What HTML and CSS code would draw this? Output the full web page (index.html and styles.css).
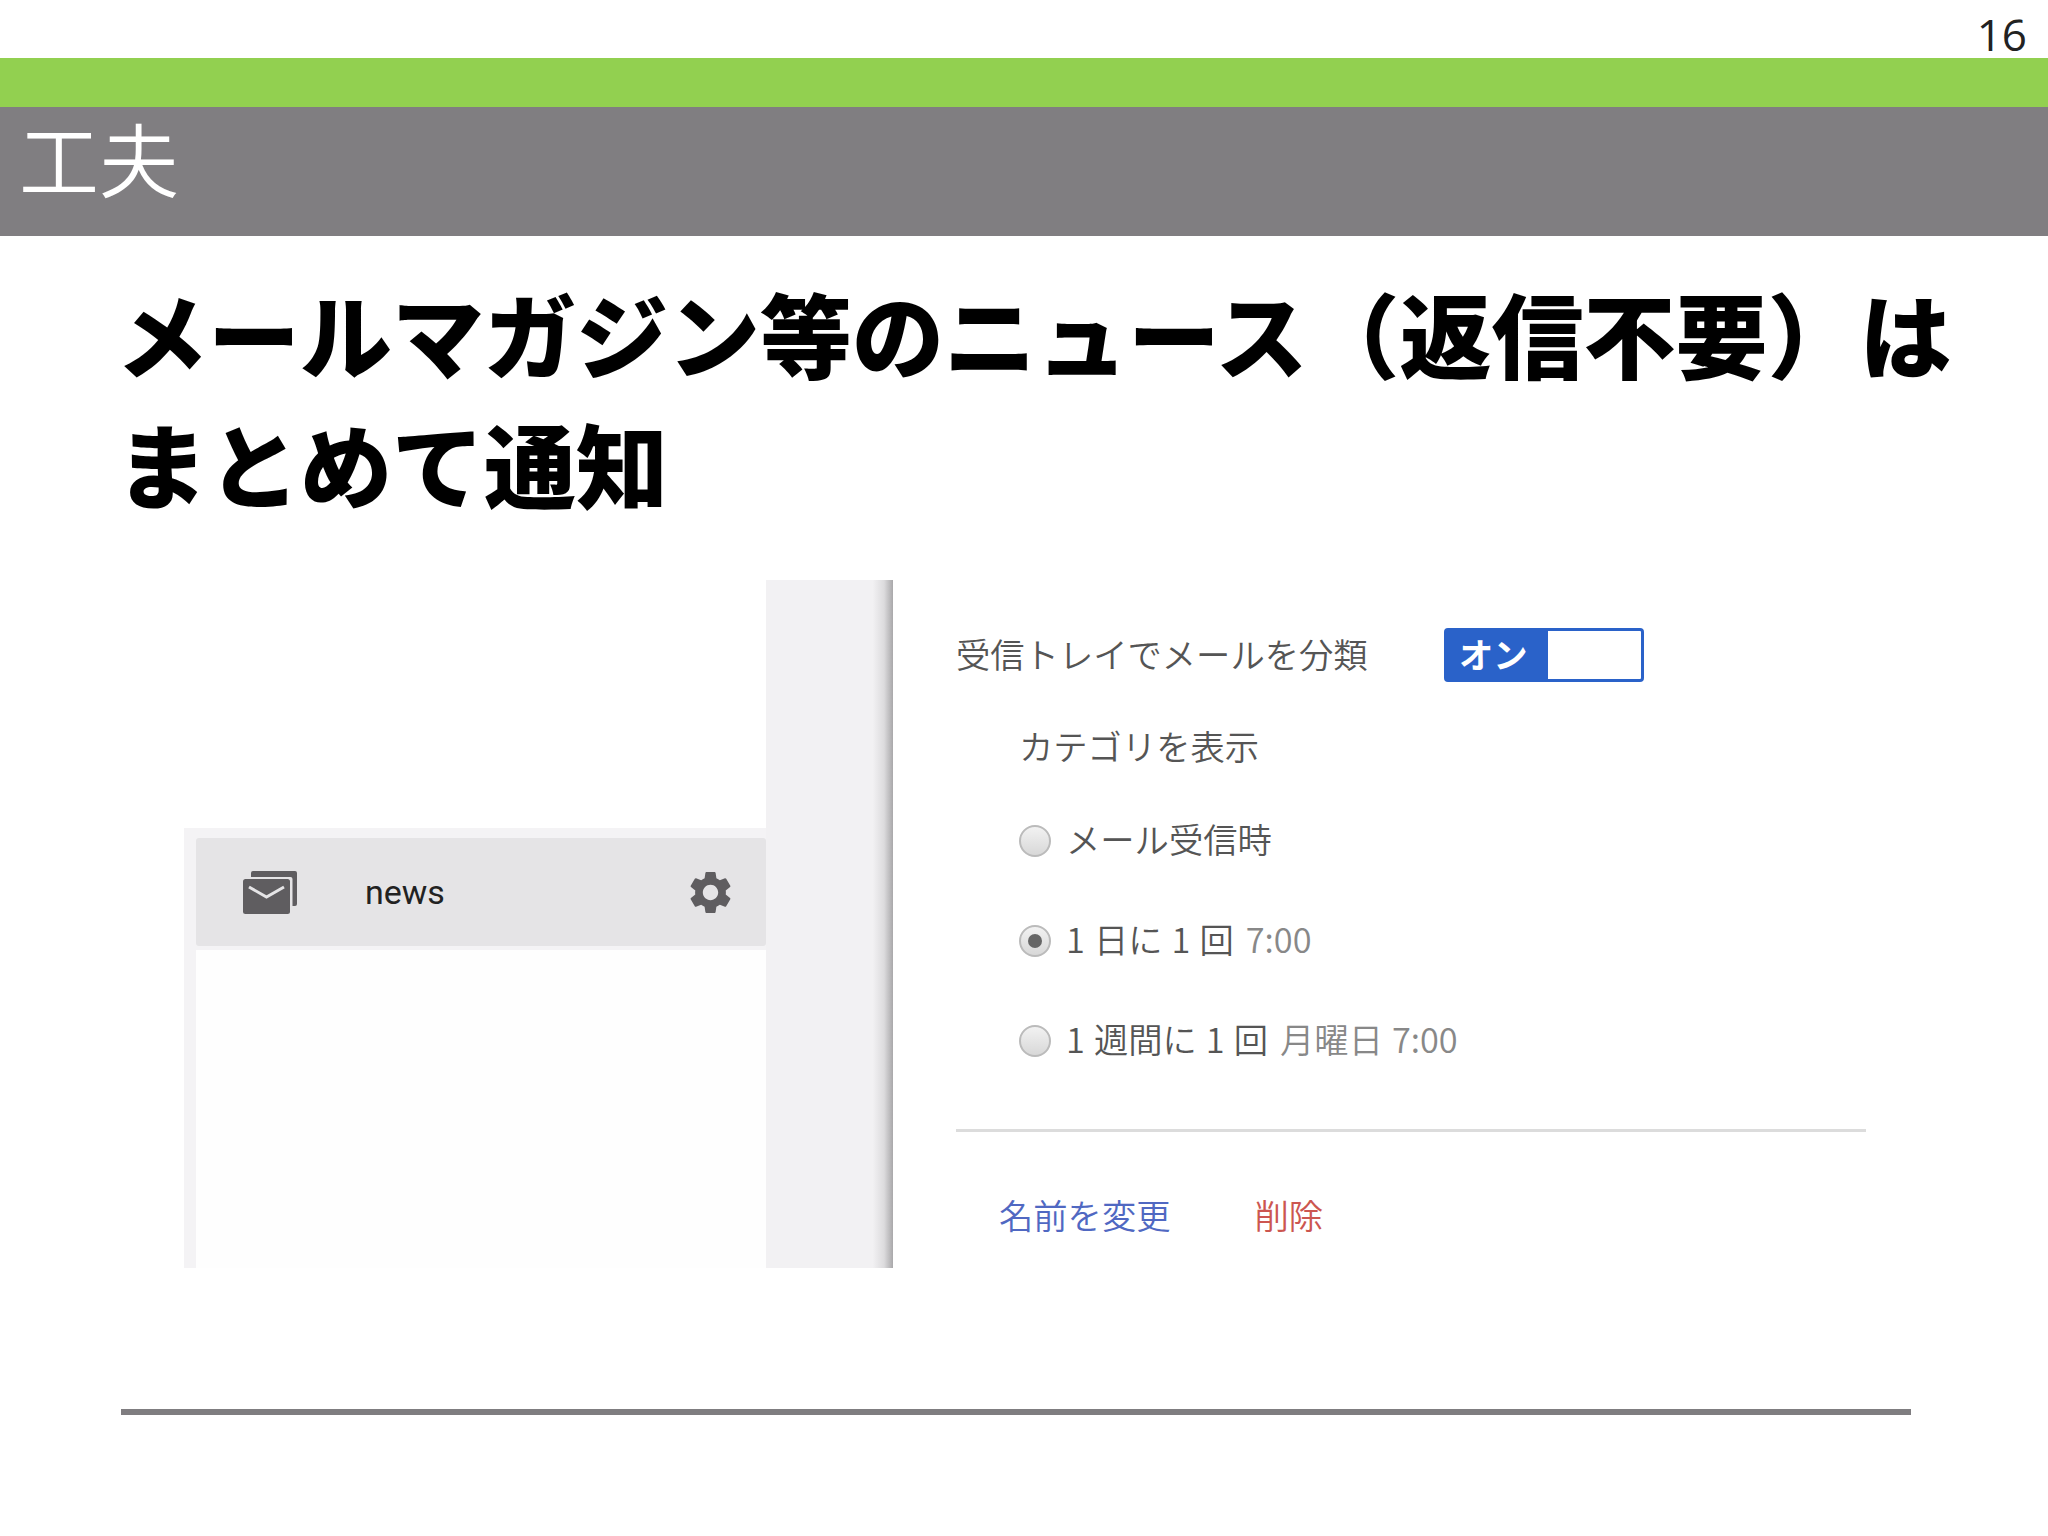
FILE: index.html
```html
<!DOCTYPE html>
<html lang="ja">
<head>
  <meta charset="UTF-8" />
  <title>工夫</title>
  <link rel="stylesheet" href="styles.css">
</head>
<body>
  <div class="slide">
    <div class="page-no">16</div>
    <div class="green-bar"></div>
    <div class="title-bar">工夫</div>
    <h1 class="heading">メールマガジン等のニュース（返信不要）は<br>まとめて通知</h1>

    <div class="shot">
      <div class="shot-left">
        <div class="sidebar">
          <div class="news-row">
            <svg class="mail-icon" viewBox="0 0 54 43">
              <path d="M10 0h42a2 2 0 0 1 2 2v31a2 2 0 0 1-2 2h-2.500V8a2 2 0 0 0-2-2H8V2a2 2 0 0 1 2-2z" fill="#5f5d60"/>
              <rect x="0" y="8" width="47" height="35" rx="2.500" fill="#5f5d60"/>
              <path d="M6 16l17.500 10L41 16" fill="none" stroke="#e5e4e6" stroke-width="3"/>
            </svg>
            <span class="news-name">news</span>
            <svg class="gear-icon" viewBox="2.4 2 19.2 20">
              <path fill="#5f5d60" d="M19.14 12.94c.04-.3.06-.61.06-.94 0-.32-.02-.64-.07-.94l2.03-1.58c.18-.14.23-.41.12-.61l-1.92-3.32c-.12-.22-.37-.29-.59-.22l-2.39.96c-.5-.38-1.03-.7-1.62-.94l-.36-2.54c-.04-.24-.24-.41-.48-.41h-3.84c-.24 0-.43.17-.47.41l-.36 2.54c-.59.24-1.13.57-1.62.94l-2.39-.96c-.22-.08-.47 0-.59.22L2.74 8.87c-.12.21-.08.47.12.61l2.03 1.58c-.05.3-.09.63-.09.94s.02.64.07.94l-2.03 1.58c-.18.14-.23.41-.12.61l1.92 3.32c.12.22.37.29.59.22l2.39-.96c.5.38 1.03.7 1.62.94l.36 2.54c.05.24.24.41.48.41h3.84c.24 0 .44-.17.47-.41l.36-2.54c.59-.24 1.13-.56 1.62-.94l2.39.96c.22.08.47 0 .59-.22l1.92-3.32c.12-.22.07-.47-.12-.61l-2.01-1.58zM12 15.6c-1.98 0-3.6-1.62-3.6-3.6s1.62-3.6 3.6-3.6 3.6 1.62 3.6 3.6-1.62 3.6-3.6 3.6z"/>
            </svg>
          </div>
          <div class="sidebar-rest"></div>
        </div>
        <div class="side-strip"></div>
      </div>

      <div class="shot-right">
        <div class="setting-row">
          <span class="setting-label">受信トレイでメールを分類</span>
          <div class="toggle">
            <span class="toggle-on">オン</span>
          </div>
        </div>
        <div class="show-label">カテゴリを表示</div>
        <div class="radio-row first">
          <span class="radio"></span>
          <span>メール受信時</span>
        </div>
        <div class="radio-row">
          <span class="radio checked"></span>
          <span>1 日に 1 回 <span class="muted">7:00</span></span>
        </div>
        <div class="radio-row">
          <span class="radio"></span>
          <span>1 週間に 1 回 <span class="muted">月曜日 7:00</span></span>
        </div>
        <div class="divider"></div>
        <div class="links">
          <span class="rename">名前を変更</span>
          <span class="remove">削除</span>
        </div>
      </div>
    </div>

    <div class="foot-line"></div>
  </div>
</body>
</html>
```

FILE: styles.css
```css
body {
  margin: 0;
  background: #fff;
  font-family: "Noto Sans CJK JP", "Noto Sans", sans-serif;
}

.slide {
  width: 2048px;
  height: 1536px;
  overflow: hidden;
}

.page-no {
  height: 58px;
  padding-right: 21px;
  text-align: right;
  font-family: "Open Sans", sans-serif;
  font-size: 44px;
  line-height: 69px;
  color: #222;
}

.green-bar {
  height: 49px;
  background: #92d050;
}

.title-bar {
  height: 129px;
  padding-left: 19px;
  background: #807e81;
  color: #fff;
  font-size: 80px;
  font-weight: 350;
  line-height: 99px;
}

.heading {
  margin: 31px 0 0 116px;
  font-size: 92px;
  font-weight: 900;
  line-height: 130px;
  color: #000;
}

.shot {
  display: flex;
  height: 688px;
  margin: 53px 0 0 184px;
}

.shot-left {
  display: flex;
  width: 709px;
}

.sidebar {
  display: flex;
  flex-direction: column;
  width: 582px;
  margin-top: 248px;
  padding: 10px 0 0 12px;
  box-sizing: border-box;
  background: #f4f3f5;
}

.news-row {
  display: flex;
  align-items: center;
  height: 108px;
  padding: 0 35px 0 47px;
  border-radius: 3px;
  background: #e5e4e6;
}

.mail-icon {
  width: 54px;
  height: 43px;
}

.news-name {
  flex: 1;
  margin-left: 68px;
  font-family: Roboto, sans-serif;
  font-size: 34px;
  font-weight: 400;
  color: #222;
}

.gear-icon {
  width: 41px;
  height: 43px;
}

.sidebar-rest {
  flex: 1;
  margin-top: 4px;
  background: #fefefe;
}

.side-strip {
  width: 127px;
  background: linear-gradient(to right, #f2f1f3 0, #f2f1f3 84%, #dcdbdd 93%, #a9a8aa 100%);
}

.shot-right {
  width: 910px;
  margin-left: 63px;
  font-size: 34.300px;
  font-weight: 350;
  color: #555;
  word-spacing: 1.400px;
}

.setting-row {
  display: flex;
  align-items: center;
  height: 54px;
  margin-top: 48px;
}

.setting-label {
  width: 488px;
  margin-top: -5px;
}

.toggle {
  display: flex;
  width: 200px;
  height: 54px;
  box-sizing: border-box;
  border: 3px solid #2a62c9;
  border-radius: 4px;
  background: #fff;
}

.toggle-on {
  width: 101px;
  padding-left: 12px;
  box-sizing: border-box;
  background: #2a62c9;
  color: #fff;
  font-weight: 700;
  line-height: 44px;
}

.show-label {
  margin: 38px 0 0 63px;
  line-height: 50px;
}

.radio-row {
  display: flex;
  align-items: center;
  gap: 15px;
  height: 47px;
  margin: 53px 0 0 63px;
}

.radio-row.first {
  margin-top: 44px;
}

.radio {
  display: flex;
  align-items: center;
  justify-content: center;
  width: 32px;
  height: 32px;
  margin-top: 7px;
  box-sizing: border-box;
  border: 2px solid #bbb;
  border-radius: 50%;
  background: linear-gradient(#f2f2f2, #d8d8d8);
}

.radio.checked::after {
  content: "";
  width: 14px;
  height: 14px;
  border-radius: 50%;
  background: #666;
}

.muted {
  margin-left: 3px;
  color: #888;
}

.divider {
  width: 910px;
  height: 3px;
  margin-top: 68px;
  background: #dcdcdc;
}

.links {
  display: flex;
  gap: 84px;
  margin: 57px 0 0 43px;
  line-height: 50px;
}

.rename {
  color: #5068c2;
}

.remove {
  color: #cc5650;
}

.foot-line {
  width: 1790px;
  height: 6px;
  margin: 141px 0 0 121px;
  background: #7f7d80;
}
```
